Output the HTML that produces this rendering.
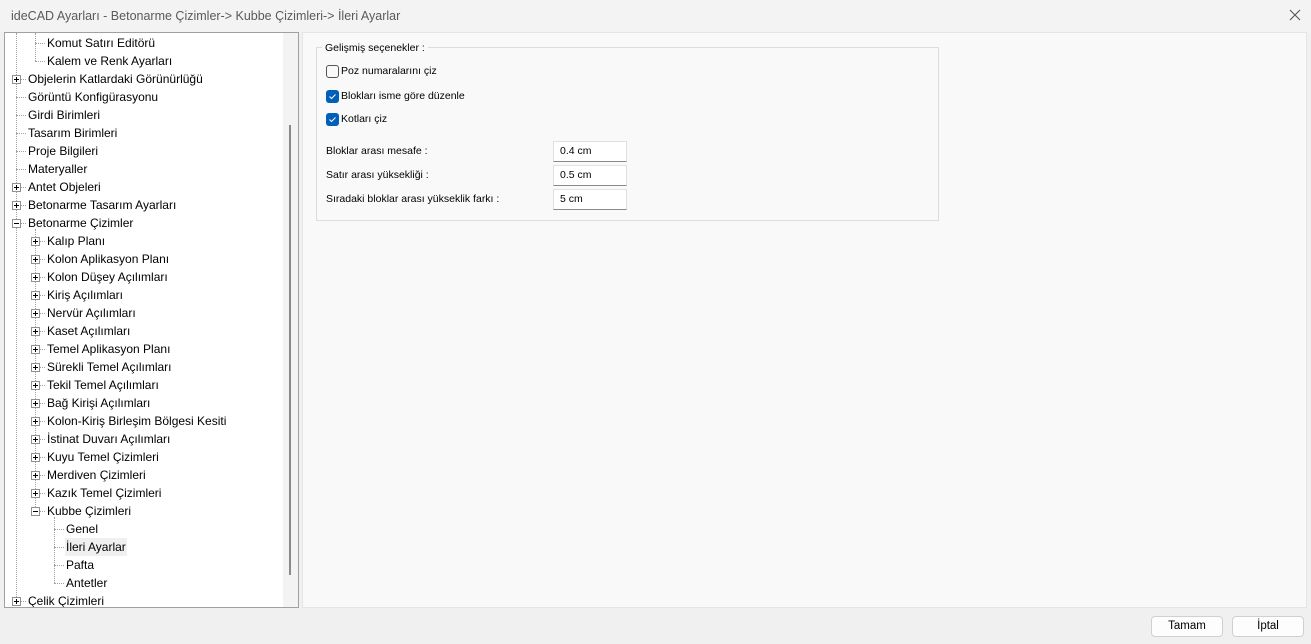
<!DOCTYPE html>
<html><head><meta charset="utf-8"><style>
*{margin:0;padding:0;box-sizing:border-box}
body{width:1311px;height:644px;background:#f0f0f0;font-family:"Liberation Sans",sans-serif;font-size:12px;color:#000;position:relative;overflow:hidden}
.abs{position:absolute}
.title{left:0;top:0;width:1311px;height:32px;background:#f3f3f3;color:#5a5a5a;font-size:12.5px;line-height:32px;padding-left:11px}
.tree{left:4px;top:32px;width:295px;height:576px;background:#fff;border:1px solid #a0a0a0;overflow:hidden}
.r{position:absolute;height:18px;line-height:18px;white-space:nowrap;font-size:12px}
.vl{position:absolute;width:0;border-left:1px dotted #a0a0a0}
.hl{position:absolute;height:0;border-top:1px dotted #a0a0a0}
.bx{position:absolute;width:9px;height:9px;border:1px solid #919191;background:#fff}
.bx:before{content:"";position:absolute;left:1px;top:3px;width:5px;height:1px;background:#000}
.bx.p:after{content:"";position:absolute;left:3px;top:1px;width:1px;height:5px;background:#000}
.right{left:302px;top:32px;width:1005px;height:576px;background:#f9f9f9;border:1px solid #e5e5e5}
.grp{left:316px;top:47px;width:623px;height:174px;border:1px solid #dcdcdc}
.cb{position:absolute;width:13px;height:13px;border-radius:3px}
.t{position:absolute;font-size:10.5px}
.inp{position:absolute;left:553px;width:74px;height:21px;background:#fff;border:1px solid #e0e0e0;border-bottom:1px solid #8a8a8a;padding-left:6px;line-height:19px;font-size:10.5px}
.btn{position:absolute;top:616px;width:72px;height:21px;background:#fdfdfd;border:1px solid #d0d0d0;border-radius:4px;text-align:center;line-height:19px;font-size:11.5px}
</style></head><body>
<div class="abs title">ideCAD Ayarları - Betonarme Çizimler-&gt; Kubbe Çizimleri-&gt; İleri Ayarlar</div>
<svg class="abs" style="left:1289px;top:9px" width="12" height="12"><path d="M1 1L11 11M11 1L1 11" stroke="#555" stroke-width="1.1"/></svg>

<div class="abs tree">
<div class="vl" style="left:11px;top:0;height:568px"></div>
<div class="vl" style="left:30px;top:0;height:28px"></div>
<div class="vl" style="left:30px;top:196px;height:282px"></div>
<div class="vl" style="left:49px;top:484px;height:66px"></div>
<div style="position:absolute;left:278px;top:0;width:16px;height:576px;background:#f3f3f3"></div>
<div style="position:absolute;left:284px;top:92px;width:2px;height:450px;background:#8a8a8a"></div>
<div id="rows"></div>
</div>

<div class="abs right"></div>
<div class="abs grp"></div>
<div class="abs" style="left:322px;top:41px;background:#f9f9f9;padding:0 3px;font-size:10.5px;line-height:14px">Gelişmiş seçenekler :</div>
<div class="cb" style="left:326px;top:65px;border:1px solid #555;background:#f9f9f9"></div>
<div class="t" style="left:341px;top:65px">Poz numaralarını çiz</div>
<div class="cb" style="left:326px;top:90px;background:#005fb8"><svg width="13" height="13"><path d="M3.5 6.5l2 2 4-4" stroke="#fff" fill="none" stroke-width="1"/></svg></div>
<div class="t" style="left:341px;top:90px">Blokları isme göre düzenle</div>
<div class="cb" style="left:326px;top:113px;background:#005fb8"><svg width="13" height="13"><path d="M3.5 6.5l2 2 4-4" stroke="#fff" fill="none" stroke-width="1"/></svg></div>
<div class="t" style="left:341px;top:113px">Kotları çiz</div>
<div class="t" style="left:326px;top:145px">Bloklar arası mesafe :</div>
<div class="t" style="left:326px;top:169px">Satır arası yüksekliği :</div>
<div class="t" style="left:326px;top:193px">Sıradaki bloklar arası yükseklik farkı :</div>
<div class="inp" style="top:141px">0.4 cm</div>
<div class="inp" style="top:165px">0.5 cm</div>
<div class="inp" style="top:189px">5 cm</div>

<div class="btn" style="left:1151px">Tamam</div>
<div class="btn" style="left:1232px">İptal</div>

<script>
var rows=[
[43,1,0,"Komut Satırı Editörü"],[61,1,0,"Kalem ve Renk Ayarları"],[79,0,"p","Objelerin Katlardaki Görünürlüğü"],
[97,0,0,"Görüntü Konfigürasyonu"],[115,0,0,"Girdi Birimleri"],[133,0,0,"Tasarım Birimleri"],[151,0,0,"Proje Bilgileri"],
[169,0,0,"Materyaller"],[187,0,"p","Antet Objeleri"],[205,0,"p","Betonarme Tasarım Ayarları"],[223,0,"m","Betonarme Çizimler"]];
var l1=["Kalıp Planı","Kolon Aplikasyon Planı","Kolon Düşey Açılımları","Kiriş Açılımları","Nervür Açılımları","Kaset Açılımları","Temel Aplikasyon Planı","Sürekli Temel Açılımları","Tekil Temel Açılımları","Bağ Kirişi Açılımları","Kolon-Kiriş Birleşim Bölgesi Kesiti","İstinat Duvarı Açılımları","Kuyu Temel Çizimleri","Merdiven Çizimleri","Kazık Temel Çizimleri"];
l1.forEach(function(t,i){rows.push([241+18*i,1,"p",t])});
rows.push([511,1,"m","Kubbe Çizimleri"]);
["Genel","İleri Ayarlar","Pafta","Antetler"].forEach(function(t,i){rows.push([529+18*i,2,0,t])});
rows.push([601,0,"p","Çelik Çizimleri"]);
var h="";
rows.forEach(function(r){
 var cy=r[0]-33, lx=11+19*r[1], tx=23+19*r[1];
 h+='<div class="hl" style="left:'+lx+'px;top:'+cy+'px;width:'+(tx-lx-2)+'px"></div>';
 if(r[2]) h+='<div class="bx '+(r[2]=="p"?"p":"")+'" style="left:'+(lx-4)+'px;top:'+(cy-4)+'px"></div>';
 var sel=r[3]=="İleri Ayarlar";
 h+='<div class="r" style="left:'+(tx-1)+'px;top:'+(cy-9)+'px;padding:0 1px;'+(sel?'background:#f0f0f0;':'')+'">'+r[3]+'</div>';
});
document.getElementById("rows").innerHTML=h;
</script>
</body></html>
